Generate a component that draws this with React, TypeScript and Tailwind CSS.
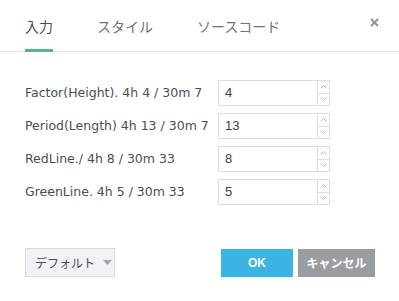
import React from "react";

const rows = [
  { label: "Factor(Height). 4h 4 / 30m 7", value: "4" },
  { label: "Period(Length) 4h 13 / 30m 7", value: "13" },
  { label: "RedLine./ 4h 8 / 30m 33", value: "8" },
  { label: "GreenLine. 4h 5 / 30m 33", value: "5" },
];

const Spinner = () => (
  <div className="flex flex-col w-[12px] border-l border-[#dcdee2]">
    <div className="flex-1 flex items-center justify-center border-b border-[#dcdee2]">
      <svg width="7" height="4" viewBox="0 0 7 4" fill="none" stroke="#b9bcc2" strokeWidth="1">
        <path d="M0.5 3.5L3.5 0.5L6.5 3.5" />
      </svg>
    </div>
    <div className="flex-1 flex items-center justify-center">
      <svg width="7" height="4" viewBox="0 0 7 4" fill="none" stroke="#b9bcc2" strokeWidth="1">
        <path d="M0.5 0.5L3.5 3.5L6.5 0.5" />
      </svg>
    </div>
  </div>
);

const App = () => {
  return <div className="w-[399px] h-[301px] bg-white flex flex-col" style={{ fontFamily: '"DejaVu Sans", "Noto Sans CJK JP", sans-serif' }}>
      {/* Tabs */}
      <div className="h-[52px] flex items-stretch border-b border-[#e0e3eb] px-[25px] relative">
        <div className="flex items-stretch gap-[44px] text-[14px]" style={{ fontFamily: '"Noto Sans CJK JP", sans-serif' }}>
          <div className="relative flex items-center text-[#4a4c52] pt-[1px]">
            入力
            <div className="absolute left-0 right-0 bottom-[-1px] h-[3px] bg-[#53b987]" />
          </div>
          <div className="flex items-center text-[#6f727a] pt-[1px]">スタイル</div>
          <div className="flex items-center text-[#6f727a] pt-[1px]">ソースコード</div>
        </div>
        <div className="absolute right-[20px] top-[18px]">
          <svg width="9" height="9" viewBox="0 0 9 9" stroke="#8e9197" strokeWidth="2">
            <path d="M1 1L8 8M8 1L1 8" />
          </svg>
        </div>
      </div>

      {/* Inputs */}
      <div className="flex flex-col gap-[7px] pt-[28px] px-[25px]">
        {rows.map((r) => (
          <div key={r.label} className="flex items-center h-[26px]">
            <div className="w-[193px] text-[12.5px] text-[#4c4e53] whitespace-nowrap">{r.label}</div>
            <div className="flex w-[112px] h-[26px] border border-[#dcdee2] bg-white">
              <div className="flex-1 flex items-center pl-[6px] text-[13px] text-[#3b3d42]" style={{ fontFamily: '"Liberation Sans", sans-serif' }}>{r.value}</div>
              <Spinner />
            </div>
          </div>
        ))}
      </div>

      {/* Footer */}
      <div className="flex items-center mt-[43px] px-[25px] h-[29px]">
        <button className="h-[29px] w-[90px] border border-[#d9dbe0] bg-[#f1f2f6] flex items-center pl-[9px] gap-[8px] text-[12px] text-[#4a4c52] whitespace-nowrap" style={{ fontFamily: '"Noto Sans CJK JP", sans-serif' }}>
          デフォルト
          <svg width="9" height="5" viewBox="0 0 9 5"><path d="M0 0H9L4.5 5Z" fill="#a3a6ac" /></svg>
        </button>
        <div className="flex-1" />
        <button className="h-[28px] w-[72px] bg-[#3bb3e4] text-white text-[12px] font-bold flex items-center justify-center" style={{ fontFamily: '"Liberation Sans", sans-serif' }}>OK</button>
        <button className="h-[28px] w-[77px] ml-[5px] mr-[-1px] bg-[#9a9ca3] text-white text-[12px] font-bold flex items-center justify-center whitespace-nowrap" style={{ fontFamily: '"Noto Sans CJK JP", sans-serif' }}>キャンセル</button>
      </div>
    </div>;
};
export default App;
